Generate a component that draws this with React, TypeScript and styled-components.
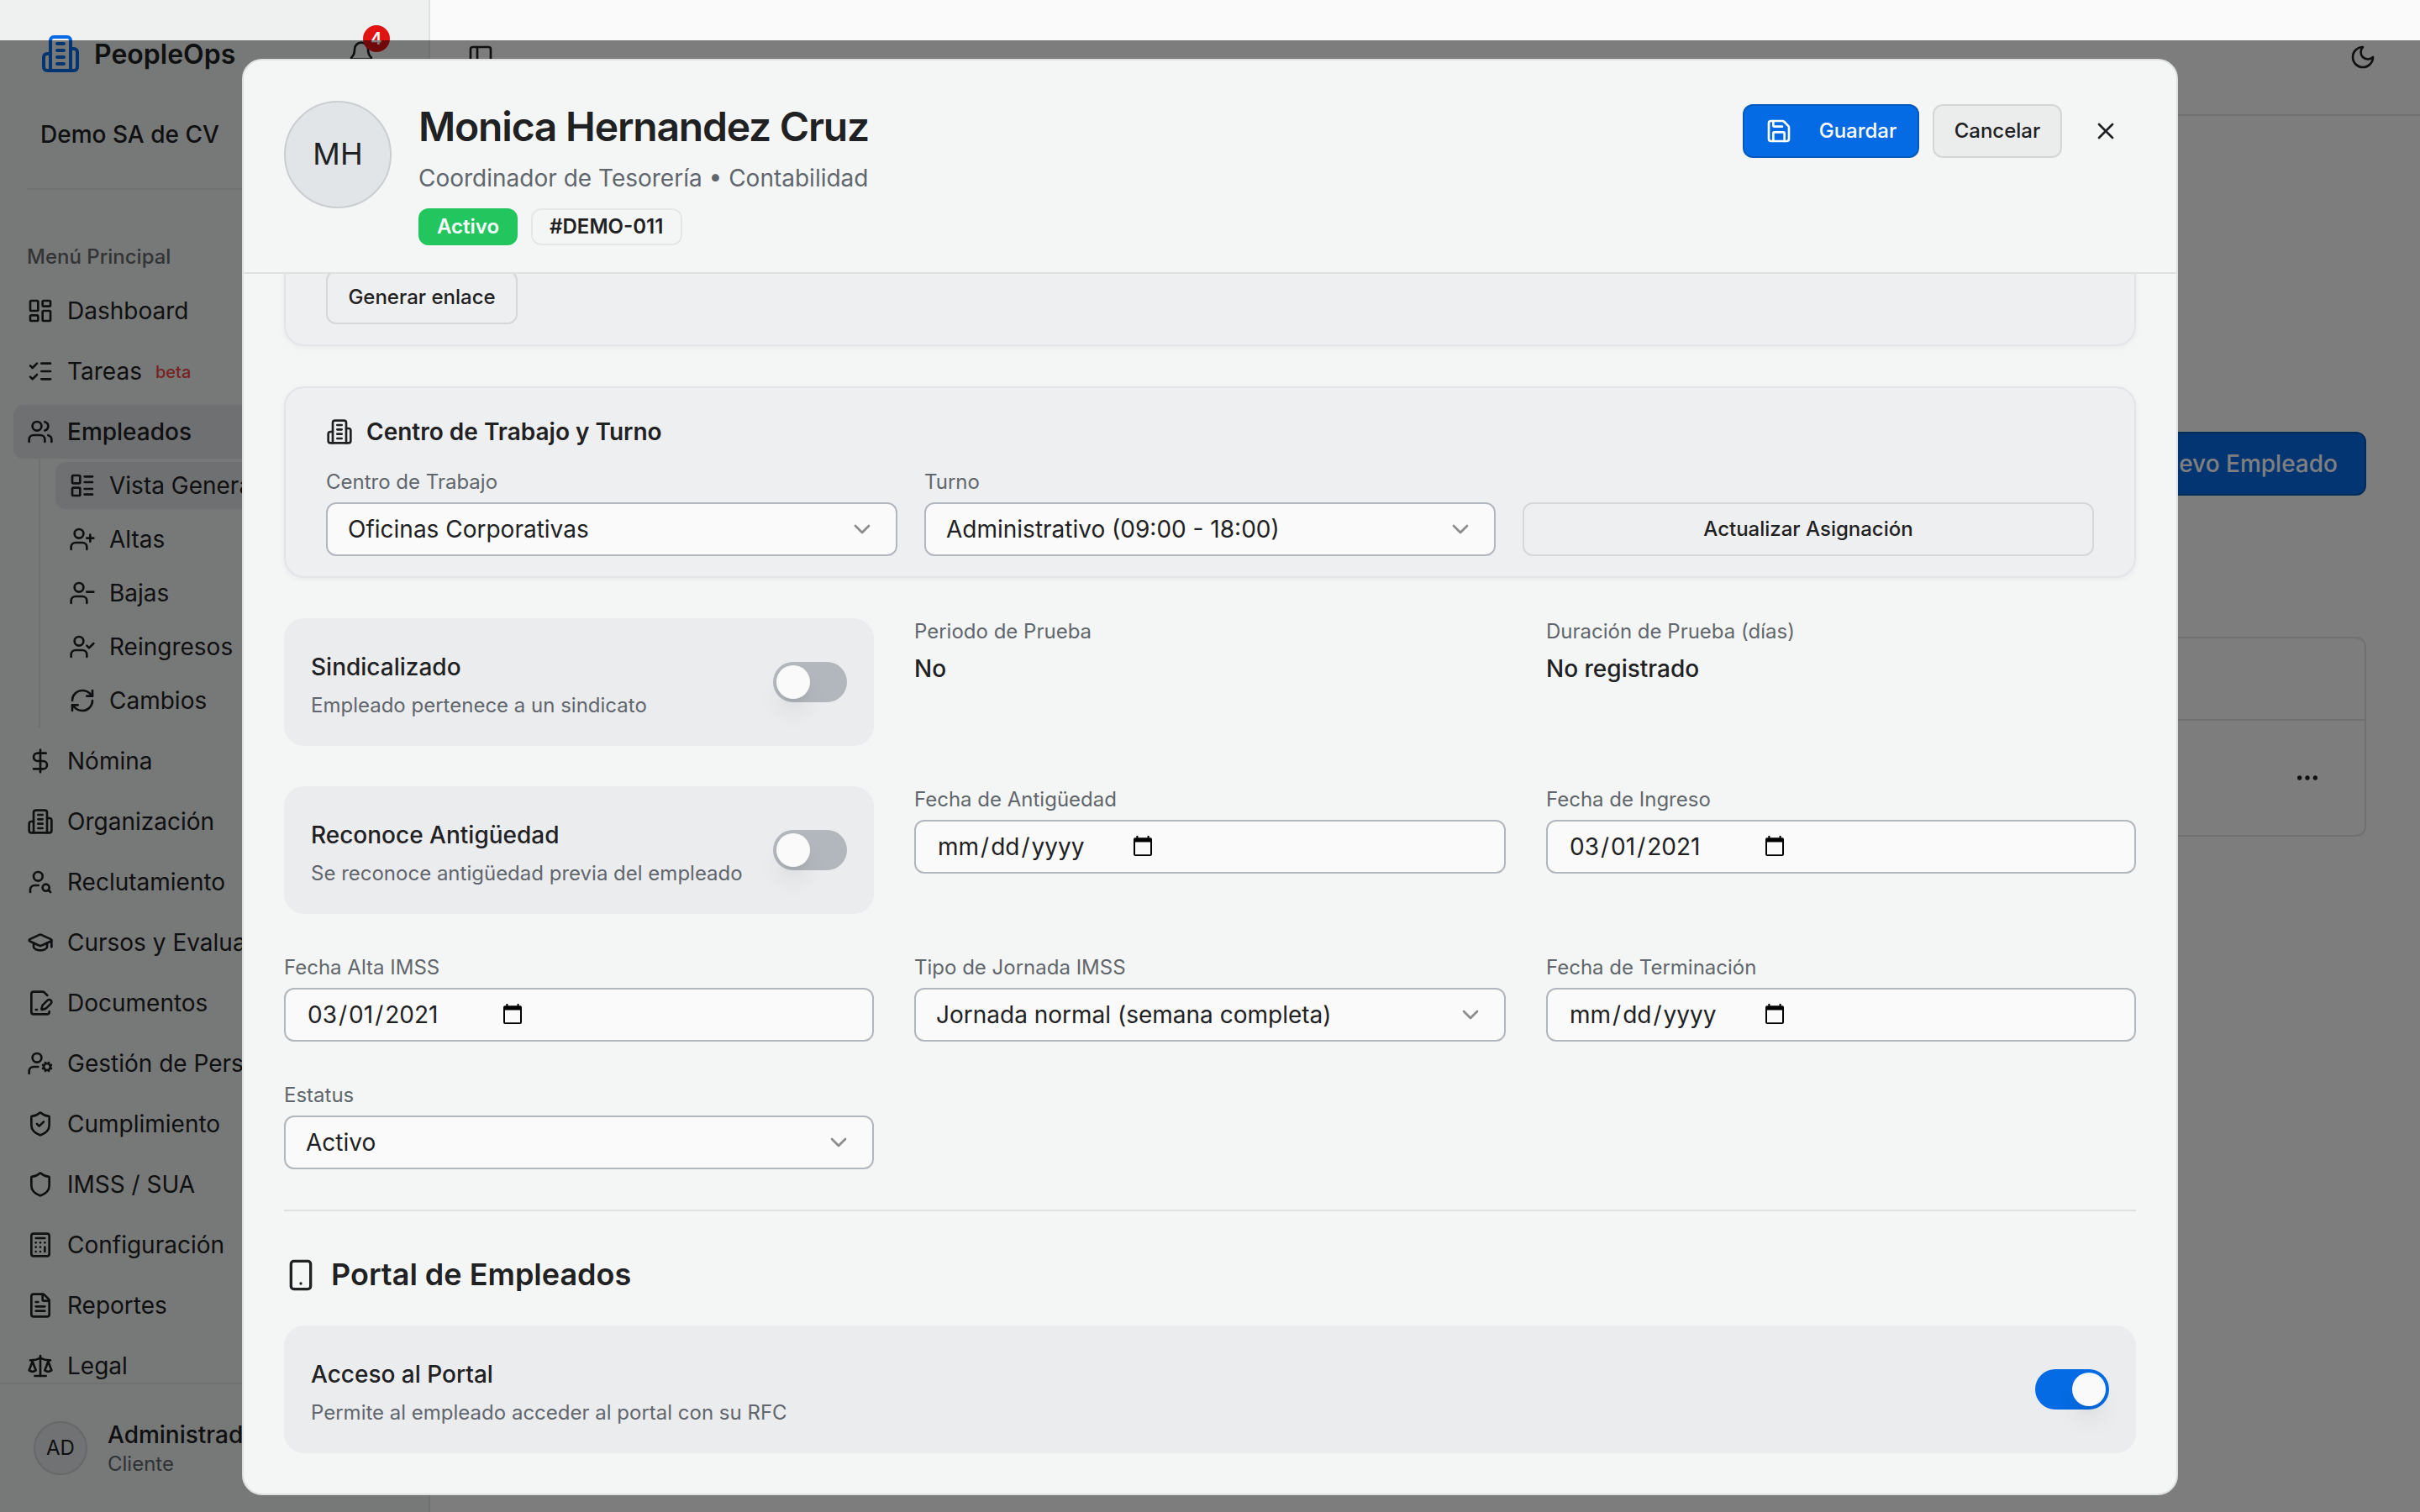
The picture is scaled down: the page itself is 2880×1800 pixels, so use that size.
import React from "react";
import styled, { createGlobalStyle, css } from "styled-components";
import {
  Bell,
  Calculator,
  ChevronDown,
  DollarSign,
  Ellipsis,
  FilePenLine,
  FileText,
  GraduationCap,
  LayoutDashboard,
  LayoutList,
  ListChecks,
  PanelLeft,
  RefreshCw,
  Save,
  Scale,
  Shield,
  ShieldCheck,
  Smartphone,
  UserCheck,
  UserCog,
  UserMinus,
  UserPlus,
  UserSearch,
  Users,
  X,
} from "lucide-react";

const color = {
  text: "#1f2123",
  muted: "#61666c",
  page: "#fafafa",
  sidebar: "#eff1f0",
  surface: "#f4f6f5",
  blue: "#056be4",
  line: "#dfe1e1",
  field: "#b2b7bd",
};

const GlobalStyle = createGlobalStyle`
  * { box-sizing: border-box; }
  html, body { margin: 0; padding: 0; }
  body {
    width: 2880px;
    height: 1800px;
    overflow: hidden;
    font-family: Inter, "Liberation Sans", sans-serif;
    font-size: 28px;
    line-height: 40px;
    color: ${color.text};
    background: ${color.page};
    -webkit-font-smoothing: antialiased;
  }
  button { font: inherit; color: inherit; margin: 0; }
  svg { display: block; flex: none; }
`;

const Page = styled.div`
  position: relative;
  display: flex;
  width: 2880px;
  height: 1800px;
  overflow: hidden;
`;

const Sidebar = styled.aside`
  display: flex;
  flex-direction: column;
  width: 512px;
  height: 100%;
  background: ${color.sidebar};
  border-right: 2px solid ${color.line};
`;

const Brand = styled.div`
  display: flex;
  align-items: center;
  gap: 16px;
  height: 48px;
  margin: 40px 64px 0 48px;
  color: ${color.blue};
`;

const BrandName = styled.span`
  flex: 1;
  padding-top: 2px;
  font-size: 32px;
  font-weight: 600;
  color: ${color.text};
`;

const BellSlot = styled.div`
  position: relative;
  color: ${color.text};
`;

const Count = styled.span`
  position: absolute;
  top: -18px;
  left: 18px;
  width: 32px;
  height: 32px;
  border-radius: 50%;
  background: #e11414;
  color: #fff;
  font-size: 20px;
  line-height: 33px;
  font-weight: 600;
  text-align: center;
`;

const Company = styled.div`
  margin: 52px 48px 0;
  font-weight: 500;
`;

const SidebarRule = styled.div`
  height: 2px;
  margin: 44px 30px 0 32px;
  background: ${color.line};
`;

const MenuTitle = styled.div`
  margin: 64px 0 0 32px;
  padding-bottom: 16px;
  font-size: 24px;
  line-height: 32px;
  font-weight: 500;
  color: #66696b;
`;

const Nav = styled.nav`
  flex: 1;
  min-height: 0;
  overflow: hidden;
  display: flex;
  flex-direction: column;
  gap: 8px;
  padding: 0 16px;
`;

const NavRow = styled.div<{ $active?: boolean }>`
  display: flex;
  flex: none;
  align-items: center;
  gap: 16px;
  height: 64px;
  padding: 0 16px;
  border-radius: 12px;
  white-space: nowrap;
  ${(p) =>
    p.$active &&
    css`
      background: #dee0e4;
      font-weight: 500;
    `}
`;

const Beta = styled.span`
  padding-top: 2px;
  font-size: 20px;
  font-weight: 500;
  color: #ef4444;
`;

const SubNav = styled.div`
  display: flex;
  flex: none;
  flex-direction: column;
  gap: 8px;
  margin: -8px 0 0 30px;
  padding: 4px 0 4px 18px;
  border-left: 2px solid ${color.line};
`;

const SubRow = styled.div<{ $active?: boolean }>`
  display: flex;
  align-items: center;
  gap: 16px;
  height: 56px;
  padding: 0 16px;
  border-radius: 12px;
  white-space: nowrap;
  background: ${(p) => (p.$active ? "#dee0e4" : "transparent")};
`;

const Account = styled.div`
  display: flex;
  align-items: center;
  gap: 24px;
  height: 154px;
  padding: 0 40px;
  border-top: 2px solid ${color.line};
`;

const Avatar = styled.div<{ $large?: boolean }>`
  display: flex;
  flex: none;
  align-items: center;
  justify-content: center;
  width: ${(p) => (p.$large ? 128 : 64)}px;
  height: ${(p) => (p.$large ? 128 : 64)}px;
  padding-bottom: ${(p) => (p.$large ? 2 : 0)}px;
  border-radius: 50%;
  border: 2px solid #cbced1;
  background: #e2e5e8;
  font-size: ${(p) => (p.$large ? 36 : 24)}px;
`;

const AccountText = styled.div`
  padding-top: 2px;
`;

const AccountName = styled.div`
  font-weight: 500;
  line-height: 36px;
  white-space: nowrap;
`;

const AccountRole = styled.div`
  font-size: 24px;
  line-height: 34px;
  color: ${color.muted};
`;

const Main = styled.main`
  flex: 1;
  display: flex;
  flex-direction: column;
  background: ${color.page};
`;

const TopBar = styled.header`
  display: flex;
  align-items: center;
  justify-content: space-between;
  height: 138px;
  padding: 0 52px 0 44px;
  border-bottom: 2px solid ${color.line};
`;

const Body = styled.section`
  display: flex;
  flex-direction: column;
  align-items: flex-end;
  padding: 376px 64px 0;
`;

const NewEmployee = styled.button`
  display: flex;
  align-items: center;
  height: 76px;
  padding: 0 32px;
  border: 2px solid #0557b8;
  border-radius: 12px;
  background: ${color.blue};
  color: #fff;
  font-weight: 500;
`;

const Table = styled.div`
  width: 100%;
  height: 238px;
  margin-top: 168px;
  border: 2px solid ${color.line};
  border-radius: 12px;
`;

const TableHead = styled.div`
  height: 96px;
`;

const TableRow = styled.div`
  display: flex;
  align-items: center;
  justify-content: flex-end;
  height: 138px;
  padding-right: 52px;
  border-top: 2px solid ${color.line};
`;

const Backdrop = styled.div`
  position: absolute;
  inset: 48px 0 0 0;
  background: rgba(0, 0, 0, 0.5);
`;

const Dialog = styled.div`
  position: absolute;
  top: 70px;
  left: 288px;
  display: flex;
  flex-direction: column;
  width: 2304px;
  height: 1710px;
  overflow: hidden;
  border: 2px solid ${color.line};
  border-radius: 24px;
  background: ${color.surface};
`;

const DialogHead = styled.header`
  position: relative;
  z-index: 1;
  display: flex;
  flex: none;
  align-items: flex-start;
  gap: 32px;
  height: 254px;
  padding: 48px 48px 0;
  border-bottom: 2px solid ${color.line};
  background: ${color.surface};
`;

const Identity = styled.div`
  flex: 1;
`;

const Name = styled.h1`
  margin: 0 0 10px;
  font-size: 48px;
  line-height: 62px;
  font-weight: 600;
  letter-spacing: -0.025em;
`;

const Role = styled.div`
  color: ${color.muted};
`;

const Badges = styled.div`
  display: flex;
  gap: 16px;
  margin-top: 16px;
`;

const Badge = styled.span<{ $solid?: boolean }>`
  min-width: ${(p) => (p.$solid ? 118 : 180)}px;
  height: 44px;
  padding: 0 20px;
  border: 2px solid ${(p) => (p.$solid ? "#23c55e" : "#e5e7e7")};
  border-radius: 12px;
  background: ${(p) => (p.$solid ? "#23c55e" : "transparent")};
  color: ${(p) => (p.$solid ? "#fff" : color.text)};
  font-size: 24px;
  line-height: 40px;
  font-weight: 600;
  white-space: nowrap;
`;

const Actions = styled.div`
  display: flex;
  align-items: center;
  gap: 16px;
  height: 72px;
`;

const Button = styled.button<{ $tone?: "primary" | "soft"; $width?: number }>`
  display: flex;
  flex: none;
  align-items: center;
  justify-content: center;
  gap: 32px;
  width: ${(p) => (p.$width ? `${p.$width}px` : "auto")};
  height: 64px;
  padding: 0 22px;
  border: 2px solid #d5d7d9;
  border-radius: 12px;
  background: transparent;
  font-size: 24px;
  font-weight: 500;
  white-space: nowrap;
  ${(p) =>
    p.$tone === "primary" &&
    css`
      border-color: #0559bd;
      background: ${color.blue};
      color: #fff;
    `}
  ${(p) =>
    p.$tone === "soft" &&
    css`
      border-color: #d4d6d5;
      background: #ebedec;
    `}
`;

const CloseButton = styled.button`
  display: flex;
  align-items: center;
  justify-content: center;
  width: 72px;
  height: 72px;
  padding: 0;
  border: 0;
  background: none;
`;

const DialogBody = styled.div`
  display: flex;
  flex: 1;
  min-height: 0;
  flex-direction: column;
  justify-content: flex-end;
  gap: 48px;
  padding: 0 48px 48px;
`;

const Card = styled.section`
  display: flex;
  flex: none;
  flex-direction: column;
  padding: 34px 48px 24px;
  border: 2px solid #e2e4e8;
  border-radius: 24px;
  background: #eeeff1;
  box-shadow: 0 2px 6px rgba(0, 0, 0, 0.05);
`;

const LinkCard = styled(Card)`
  align-items: flex-start;
`;

const CardTitle = styled.h2`
  display: flex;
  align-items: center;
  gap: 16px;
  height: 36px;
  margin: 0 0 26px;
  font-size: 28px;
  font-weight: 600;
`;

const AssignmentGrid = styled.div`
  display: grid;
  flex: none;
  grid-template-columns: repeat(3, minmax(0, 1fr));
  gap: 32px;
  align-items: end;
`;

const FieldGrid = styled.div`
  display: grid;
  flex: none;
  grid-template-columns: 702px 704px 702px;
  gap: 48px;
  align-items: start;
`;

const Field = styled.div`
  display: flex;
  flex-direction: column;
  gap: 8px;
`;

const Label = styled.label`
  font-size: 24px;
  line-height: 32px;
  color: ${color.muted};
`;

const Value = styled.div`
  font-weight: 500;
`;

const Control = styled.div`
  display: flex;
  align-items: center;
  justify-content: space-between;
  height: 64px;
  padding: 0 24px;
  border: 2px solid ${color.field};
  border-radius: 12px;
  background: #fafafa;
`;

const Chevron = styled(ChevronDown)`
  opacity: 0.5;
`;

const DateControl = styled(Control)`
  justify-content: flex-start;
  padding: 0 24px 0 26px;
`;

const DateText = styled.span`
  display: flex;
  gap: 2px;
  width: 233px;
`;

const CalendarSlot = styled.span`
  padding-bottom: 2px;
`;

const ToggleCard = styled.div`
  display: flex;
  flex: none;
  align-items: center;
  justify-content: space-between;
  height: 152px;
  padding: 0 32px;
  border-radius: 24px;
  background: #ebecee;
`;

const ToggleText = styled.div`
  padding-top: 8px;
`;

const ToggleTitle = styled.div`
  margin-bottom: 8px;
  font-weight: 500;
`;

const ToggleHint = styled.div`
  font-size: 24px;
  line-height: 36px;
  color: ${color.muted};
`;

const Track = styled.div<{ $on?: boolean }>`
  display: flex;
  justify-content: ${(p) => (p.$on ? "flex-end" : "flex-start")};
  width: 88px;
  height: 48px;
  padding: 4px;
  border-radius: 24px;
  background: ${(p) => (p.$on ? color.blue : color.field)};
`;

const Thumb = styled.div`
  width: 40px;
  height: 40px;
  border-radius: 50%;
  background: #fafafa;
  box-shadow: 0 20px 30px -6px rgba(0, 0, 0, 0.1), 0 8px 12px -8px rgba(0, 0, 0, 0.1);
`;

const Portal = styled.section`
  display: flex;
  flex: none;
  flex-direction: column;
  padding-top: 48px;
  border-top: 2px solid ${color.line};
`;

const PortalTitle = styled.h2`
  display: flex;
  align-items: center;
  gap: 16px;
  height: 56px;
  margin: 0 0 32px;
  font-size: 36px;
  font-weight: 600;
`;

const PortalName = styled.span`
  padding-bottom: 2px;
`;

const strokeProps = {
  viewBox: "0 0 24 24",
  fill: "none",
  stroke: "currentColor",
  strokeWidth: 2,
  strokeLinecap: "round" as const,
  strokeLinejoin: "round" as const,
};

function Building({ size = 32 }: { size?: number }) {
  return (
    <svg width={size} height={size} {...strokeProps}>
      <path d="M6 22V4a2 2 0 0 1 2-2h8a2 2 0 0 1 2 2v18Z" />
      <path d="M6 12H4a2 2 0 0 0-2 2v6a2 2 0 0 0 2 2h2" />
      <path d="M18 9h2a2 2 0 0 1 2 2v9a2 2 0 0 1-2 2h-2" />
      <path d="M10 6h4M10 10h4M10 14h4M10 18h4" />
    </svg>
  );
}

function Crescent() {
  return (
    <svg width={32} height={32} {...strokeProps}>
      <path d="M12 3a6 6 0 0 0 9 9 9 9 0 1 1-9-9Z" />
    </svg>
  );
}

function CalendarGlyph() {
  return (
    <svg width={22} height={24} viewBox="0 0 22 24" fill="#000">
      <path
        fillRule="evenodd"
        d="M3.4 0h2v2.3h11.2V0h2v2.3H20a2 2 0 0 1 2 2V22a2 2 0 0 1-2 2H2a2 2 0 0 1-2-2V4.300a2 2 0 0 1 2-2h1.400zM2 7.400V22.200h18V7.400z"
      />
    </svg>
  );
}

function SelectField({ label, value }: { label: string; value: string }) {
  return (
    <Field>
      <Label>{label}</Label>
      <Control>
        <span>{value}</span>
        <Chevron size={32} />
      </Control>
    </Field>
  );
}

function DateField({ label, value }: { label: string; value: string }) {
  const [month, day, year] = value.split("/");
  return (
    <Field>
      <Label>{label}</Label>
      <DateControl>
        <DateText>
          <span>{month}</span>
          <span>/</span>
          <span>{day}</span>
          <span>/</span>
          <span>{year}</span>
        </DateText>
        <CalendarSlot>
          <CalendarGlyph />
        </CalendarSlot>
      </DateControl>
    </Field>
  );
}

function Toggle({ title, hint, on }: { title: string; hint: string; on?: boolean }) {
  return (
    <ToggleCard>
      <ToggleText>
        <ToggleTitle>{title}</ToggleTitle>
        <ToggleHint>{hint}</ToggleHint>
      </ToggleText>
      <Track $on={on}>
        <Thumb />
      </Track>
    </ToggleCard>
  );
}

const subItems = [
  { icon: LayoutList, label: "Vista General", active: true },
  { icon: UserPlus, label: "Altas" },
  { icon: UserMinus, label: "Bajas" },
  { icon: UserCheck, label: "Reingresos" },
  { icon: RefreshCw, label: "Cambios" },
];

const lowerItems = [
  { icon: DollarSign, label: "Nómina" },
  { icon: Building, label: "Organización" },
  { icon: UserSearch, label: "Reclutamiento" },
  { icon: GraduationCap, label: "Cursos y Evaluaciones" },
  { icon: FilePenLine, label: "Documentos" },
  { icon: UserCog, label: "Gestión de Personal" },
  { icon: ShieldCheck, label: "Cumplimiento" },
  { icon: Shield, label: "IMSS / SUA" },
  { icon: Calculator, label: "Configuración" },
  { icon: FileText, label: "Reportes" },
  { icon: Scale, label: "Legal" },
];

export default function App() {
  return (
    <>
      <GlobalStyle />
      <Page>
        <Sidebar>
          <Brand>
            <Building size={48} />
            <BrandName>PeopleOps</BrandName>
            <BellSlot>
              <Bell size={32} />
              <Count>4</Count>
            </BellSlot>
          </Brand>
          <Company>Demo SA de CV</Company>
          <SidebarRule />
          <MenuTitle>Menú Principal</MenuTitle>
          <Nav>
            <NavRow>
              <LayoutDashboard size={32} />
              Dashboard
            </NavRow>
            <NavRow>
              <ListChecks size={32} />
              Tareas <Beta>beta</Beta>
            </NavRow>
            <NavRow $active>
              <Users size={32} />
              Empleados
            </NavRow>
            <SubNav>
              {subItems.map(({ icon: Icon, label, active }) => (
                <SubRow key={label} $active={active}>
                  <Icon size={32} />
                  {label}
                </SubRow>
              ))}
            </SubNav>
            {lowerItems.map(({ icon: Icon, label }) => (
              <NavRow key={label}>
                <Icon size={32} />
                {label}
              </NavRow>
            ))}
          </Nav>
          <Account>
            <Avatar>AD</Avatar>
            <AccountText>
              <AccountName>Administrador</AccountName>
              <AccountRole>Cliente</AccountRole>
            </AccountText>
          </Account>
        </Sidebar>

        <Main>
          <TopBar>
            <PanelLeft size={32} />
            <Crescent />
          </TopBar>
          <Body>
            <NewEmployee>Nuevo Empleado</NewEmployee>
            <Table>
              <TableHead />
              <TableRow>
                <Ellipsis size={32} />
              </TableRow>
            </Table>
          </Body>
        </Main>

        <Backdrop />

        <Dialog role="dialog">
          <DialogHead>
            <Avatar $large>MH</Avatar>
            <Identity>
              <Name>Monica Hernandez Cruz</Name>
              <Role>Coordinador de Tesorería • Contabilidad</Role>
              <Badges>
                <Badge $solid>Activo</Badge>
                <Badge>#DEMO-011</Badge>
              </Badges>
            </Identity>
            <Actions>
              <Button $tone="primary" $width={210}>
                <Save size={32} />
                Guardar
              </Button>
              <Button $tone="soft" $width={154}>Cancelar</Button>
              <CloseButton aria-label="Cerrar">
                <X size={32} />
              </CloseButton>
            </Actions>
          </DialogHead>

          <DialogBody>
            <LinkCard>
              <Button $width={228}>Generar enlace</Button>
            </LinkCard>

            <Card>
              <CardTitle>
                <Building />
                Centro de Trabajo y Turno
              </CardTitle>
              <AssignmentGrid>
                <SelectField label="Centro de Trabajo" value="Oficinas Corporativas" />
                <SelectField label="Turno" value="Administrativo (09:00 - 18:00)" />
                <Button>Actualizar Asignación</Button>
              </AssignmentGrid>
            </Card>

            <FieldGrid>
              <Toggle title="Sindicalizado" hint="Empleado pertenece a un sindicato" />
              <Field>
                <Label>Periodo de Prueba</Label>
                <Value>No</Value>
              </Field>
              <Field>
                <Label>Duración de Prueba (días)</Label>
                <Value>No registrado</Value>
              </Field>

              <Toggle title="Reconoce Antigüedad" hint="Se reconoce antigüedad previa del empleado" />
              <DateField label="Fecha de Antigüedad" value="mm/dd/yyyy" />
              <DateField label="Fecha de Ingreso" value="03/01/2021" />

              <DateField label="Fecha Alta IMSS" value="03/01/2021" />
              <SelectField label="Tipo de Jornada IMSS" value="Jornada normal (semana completa)" />
              <DateField label="Fecha de Terminación" value="mm/dd/yyyy" />

              <SelectField label="Estatus" value="Activo" />
            </FieldGrid>

            <Portal>
              <PortalTitle>
                <Smartphone size={40} />
                <PortalName>Portal de Empleados</PortalName>
              </PortalTitle>
              <Toggle title="Acceso al Portal" hint="Permite al empleado acceder al portal con su RFC" on />
            </Portal>
          </DialogBody>
        </Dialog>
      </Page>
    </>
  );
}
